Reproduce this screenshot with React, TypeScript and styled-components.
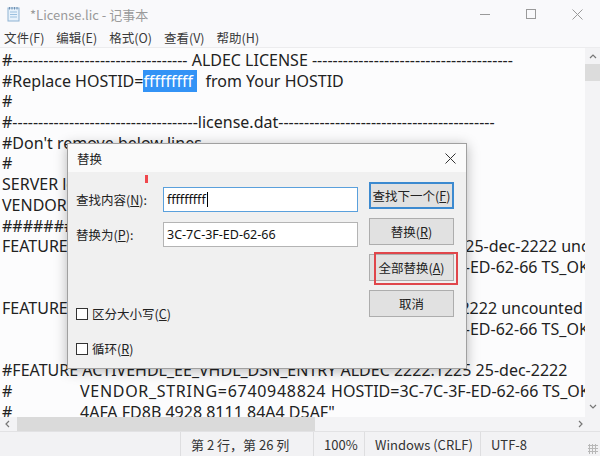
import styled, { createGlobalStyle } from "styled-components";

const GlobalStyle = createGlobalStyle`
  html, body {
    margin: 0;
    padding: 0;
    overflow: hidden;
    background: #fff;
  }
`;

const UI = `"Noto Sans", "Noto Sans CJK SC", sans-serif`;
const CJK = `"Noto Sans CJK SC", "Noto Sans", sans-serif`;

const Window = styled.div`
  position: relative;
  width: 600px;
  height: 456px;
  display: flex;
  flex-direction: column;
  background: #fbfbfc;
  font-family: ${UI};
  overflow: hidden;
`;

const TitleBar = styled.div`
  height: 28px;
  display: flex;
  align-items: center;
  padding-left: 7px;
  background: #f9f9fb;
`;

const TitleText = styled.span`
  margin-left: 10px;
  font-family: ${CJK};
  font-size: 13px;
  color: #9a9a9a;
  flex: 1;
`;

const WinButton = styled.div`
  width: 46px;
  height: 28px;
  display: flex;
  align-items: center;
  justify-content: center;
`;

const MenuBar = styled.div`
  height: 19px;
  display: flex;
  align-items: center;
  padding-left: 4px;
  gap: 12px;
  background: #f9f9fb;
  border-bottom: 1px solid #ececee;
`;

const MenuItem = styled.span`
  font-family: ${CJK};
  font-size: 12.5px;
  color: #3a3a3a;
`;

const Editor = styled.div`
  flex: 1;
  display: grid;
  grid-template-columns: 1fr 15px;
  grid-template-rows: 1fr 14px;
  min-height: 0;
`;

const TextPane = styled.div`
  overflow: hidden;
  padding: 2px 0 0 2px;
  background: #fcfcfd;
`;

const Line = styled.div`
  height: 20.7px;
  line-height: 20.7px;
  font-size: 16px;
  color: #222;
  white-space: pre;
  tab-size: 78px;
`;

const Sel = styled.span`
  background: #3393f6;
  color: #fff;
`;

const Wide = styled.span`
  letter-spacing: 0.7px;
`;

const VScroll = styled.div`
  background: #f3f3f5;
  display: flex;
  flex-direction: column;
  align-items: center;
`;

const Thumb = styled.div`
  background: #dcdcdc;
  width: 15px;
  height: 17px;
  margin-top: 2px;
`;

const HScroll = styled.div`
  background: #f3f3f5;
  display: flex;
  align-items: center;
  padding-left: 3px;
`;

const HThumb = styled.div`
  background: #dadada;
  height: 14px;
  width: 298px;
  margin-left: 4px;
  flex: none;
`;

const Spacer = styled.div<{ $h?: number }>`
  flex: ${(p) => (p.$h ? "none" : 1)};
  height: ${(p) => (p.$h ? `${p.$h}px` : "auto")};
`;

const Corner = styled.div`
  background: #f3f3f5;
`;

const StatusBar = styled.div`
  height: 24px;
  display: flex;
  align-items: center;
  background: #f2f2f4;
  border-top: 1px solid #e2e2e4;
  font-size: 13px;
  color: #333;
  padding-left: 180px;
  position: relative;
`;

const Cell = styled.div<{ $w: number }>`
  width: ${(p) => p.$w}px;
  height: 100%;
  display: flex;
  align-items: center;
  padding-left: 10px;
  box-sizing: border-box;
  border-left: 1px solid #dedee0;
  font-family: ${CJK};
  white-space: pre;
`;

const Grip = styled.div`
  position: absolute;
  right: 2px;
  bottom: 2px;
  width: 10px;
  height: 10px;
  background-image: radial-gradient(circle, #b8b8b8 1px, transparent 1.2px);
  background-size: 3px 3px;
`;

/* dialog */

const Dialog = styled.div`
  position: absolute;
  left: 67px;
  top: 143px;
  width: 400px;
  height: 226px;
  box-sizing: border-box;
  border: 1px solid #a0a0a0;
  background: #f0f0f0;
  box-shadow: 0 2px 12px rgba(0, 0, 0, 0.28);
  display: flex;
  flex-direction: column;
`;

const DialogTitle = styled.div`
  height: 28px;
  background: #fafafa;
  display: flex;
  align-items: center;
  padding: 0 10px 0 9px;
  font-family: ${CJK};
  font-size: 12.5px;
  color: #222;
`;

const DialogCaption = styled.span`
  flex: 1;
`;

const DialogBody = styled.div`
  flex: 1;
  display: flex;
  padding: 10px 12px 0 8px;
  position: relative;
`;

const Form = styled.div`
  flex: 1;
  display: flex;
  flex-direction: column;
`;

const FieldRow = styled.div<{ $top: number }>`
  display: flex;
  align-items: center;
  margin-top: ${(p) => p.$top}px;
`;

const Label = styled.label`
  width: 87px;
  font-family: ${CJK};
  font-size: 12.5px;
  color: #222;
`;

const Input = styled.div<{ $focus?: boolean }>`
  width: 195px;
  height: 25px;
  box-sizing: border-box;
  border: 1px solid ${(p) => (p.$focus ? "#5aa0dc" : "#b4b4b4")};
  background: #fff;
  display: flex;
  align-items: center;
  padding-left: 3px;
  font-size: 12.5px;
  color: #111;
`;

const Caret = styled.span`
  display: inline-block;
  width: 1px;
  height: 15px;
  background: #000;
  margin-left: 1px;
`;

const CheckRow = styled.div<{ $top: number }>`
  display: flex;
  align-items: center;
  margin-top: ${(p) => p.$top}px;
  font-family: ${CJK};
  font-size: 12.5px;
  color: #222;
`;

const Box = styled.span`
  width: 12px;
  height: 12px;
  box-sizing: border-box;
  border: 1px solid #333;
  background: #fff;
  margin-right: 4px;
`;

const Buttons = styled.div`
  width: 85px;
  display: flex;
  flex-direction: column;
  gap: 9px;
`;

const Button = styled.div<{ $default?: boolean }>`
  position: relative;
  height: 27px;
  box-sizing: border-box;
  border: ${(p) => (p.$default ? "2px solid #3c8ad0" : "1px solid #adadad")};
  background: #e1e1e1;
  display: flex;
  align-items: center;
  justify-content: center;
  font-family: ${CJK};
  font-size: 12.5px;
  color: #222;
`;

const RedMark = styled.div`
  position: absolute;
  left: 4px;
  top: -3px;
  width: 84px;
  height: 33px;
  box-sizing: border-box;
  border: 2px solid #e0464b;
`;

const Cursor = styled.div`
  position: absolute;
  left: 77px;
  top: 3px;
  width: 3px;
  height: 8px;
  background: #f0474d;
`;

const lines: React.ReactNode[] = [
  "#---------------------------------- ALDEC LICENSE ---------------------------------------",
  <>
    #Replace HOSTID=<Sel>fffffffff </Sel>  from Your HOSTID
  </>,
  "#",
  "#------------------------------------license.dat------------------------------------------",
  "#Don't remove below lines",
  "#",
  "SERVER localhost 3C-7C-3F-ED-62-66",
  "VENDOR ALDEC",
  "##########################################",
  "FEATURE ACTIVEHDL_EE_VHDL_DSN_ENTRY ALDEC 2222.1225 25-dec-2222 uncounted \\",
  "\t    VENDOR_STRING=6740948824 HOSTID=3C-7C-3F-ED-62-66 TS_OK \\",
  "",
  "FEATURE ACTIVEHDL_EE_VHDL_SIM ALDEC 2222.1225 25-dec-2222 uncounted \\",
  "\t    VENDOR_STRING=6740948824 HOSTID=3C-7C-3F-ED-62-66 TS_OK \\",
  "",
  "#FEATURE ACTIVEHDL_EE_VHDL_DSN_ENTRY ALDEC 2222.1225 25-dec-2222",
  <>
    #{"\t"}
    <Wide>VENDOR_STRING=6740948824 </Wide>HOSTID=3C-7C-3F-ED-62-66 TS_OK
  </>,
  '#\t4AFA FD8B 4928 8111 84A4 D5AF"',
];

const Chevron = ({ dir }: { dir: "up" | "down" | "left" | "right" }) => {
  const d = {
    up: "M2 6 L5 3 L8 6",
    down: "M2 4 L5 7 L8 4",
    left: "M6 2 L3 5 L6 8",
    right: "M4 2 L7 5 L4 8",
  }[dir];
  return (
    <svg width="10" height="10" viewBox="0 0 10 10">
      <path d={d} fill="none" stroke="#777" strokeWidth="1.2" />
    </svg>
  );
};

const CloseGlyph = ({ color }: { color: string }) => (
  <svg width="11" height="11" viewBox="0 0 11 11">
    <path d="M0.5 0.5L10.5 10.5M10.5 0.5L0.5 10.5" stroke={color} strokeWidth="1" />
  </svg>
);

const NotepadIcon = () => (
  <svg width="13" height="16" viewBox="0 0 13 16">
    <rect x="1" y="2" width="11" height="13" fill="#e8f2fb" stroke="#8fb3d3" />
    <path d="M3 6h7M3 8.5h7M3 11h7" stroke="#9cc0df" strokeWidth="1" />
    <path d="M2.5 1v2.5M5 1v2.5M7.5 1v2.5M10 1v2.5" stroke="#6f8fb0" strokeWidth="1" />
  </svg>
);

export default function App() {
  return (
    <>
      <GlobalStyle />
      <Window>
        <TitleBar>
          <NotepadIcon />
          <TitleText>*License.lic - 记事本</TitleText>
          <WinButton>
            <svg width="10" height="10" viewBox="0 0 10 10">
              <path d="M0 5.5h10" stroke="#9a9a9a" strokeWidth="1" />
            </svg>
          </WinButton>
          <WinButton>
            <svg width="10" height="10" viewBox="0 0 10 10">
              <rect x="0.5" y="0.5" width="9" height="9" fill="none" stroke="#9a9a9a" />
            </svg>
          </WinButton>
          <WinButton>
            <CloseGlyph color="#9a9a9a" />
          </WinButton>
        </TitleBar>
        <MenuBar>
          <MenuItem>文件(F)</MenuItem>
          <MenuItem>编辑(E)</MenuItem>
          <MenuItem>格式(O)</MenuItem>
          <MenuItem>查看(V)</MenuItem>
          <MenuItem>帮助(H)</MenuItem>
        </MenuBar>
        <Editor>
          <TextPane>
            {lines.map((l, i) => (
              <Line key={i}>{l}</Line>
            ))}
          </TextPane>
          <VScroll>
            <Spacer $h={4} />
            <Chevron dir="up" />
            <Thumb />
            <Spacer />
            <Chevron dir="down" />
            <Spacer $h={6} />
          </VScroll>
          <HScroll>
            <Chevron dir="left" />
            <HThumb />
            <Spacer />
            <Chevron dir="right" />
          </HScroll>
          <Corner />
        </Editor>
        <StatusBar>
          <Cell $w={133}>第 2 行，第 26 列</Cell>
          <Cell $w={51}>100%</Cell>
          <Cell $w={116}>Windows (CRLF)</Cell>
          <Cell $w={120}>UTF-8</Cell>
          <Grip />
        </StatusBar>

        <Dialog>
          <DialogTitle>
            <DialogCaption>替换</DialogCaption>
            <CloseGlyph color="#333" />
          </DialogTitle>
          <DialogBody>
            <Cursor />
            <Form>
              <FieldRow $top={5}>
                <Label>
                  查找内容(<u>N</u>):
                </Label>
                <Input $focus>
                  fffffffff
                  <Caret />
                </Input>
              </FieldRow>
              <FieldRow $top={10}>
                <Label>
                  替换为(<u>P</u>):
                </Label>
                <Input>3C-7C-3F-ED-62-66</Input>
              </FieldRow>
              <CheckRow $top={57}>
                <Box />
                区分大小写(<u>C</u>)
              </CheckRow>
              <CheckRow $top={16}>
                <Box />
                循环(<u>R</u>)
              </CheckRow>
            </Form>
            <Buttons>
              <Button $default>
                查找下一个(<u>F</u>)
              </Button>
              <Button>
                替换(<u>R</u>)
              </Button>
              <Button>
                全部替换(<u>A</u>)
                <RedMark />
              </Button>
              <Button>取消</Button>
            </Buttons>
          </DialogBody>
        </Dialog>
      </Window>
    </>
  );
}
